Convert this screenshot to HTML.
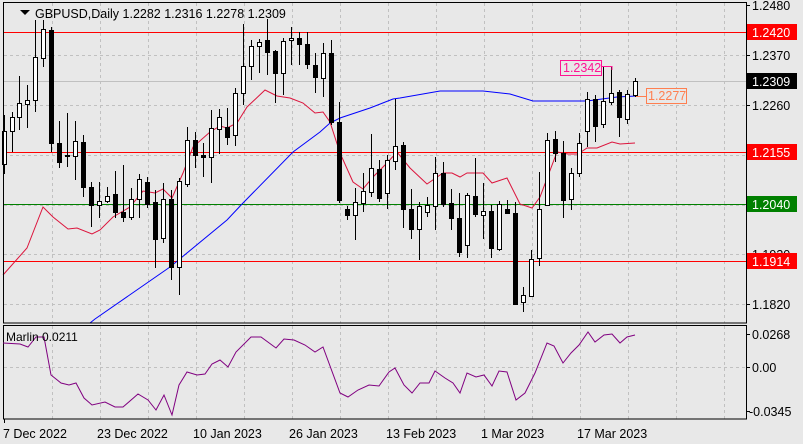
<!DOCTYPE html>
<html><head><meta charset="utf-8"><style>
html,body{margin:0;padding:0;background:#e8e8e8;}
svg{display:block;font-family:"Liberation Sans",sans-serif;}
</style></head><body>
<svg id="s" width="803" height="444" viewBox="0 0 803 444" xmlns="http://www.w3.org/2000/svg">
<rect width="803" height="444" fill="#e8e8e8"/>
<g id="grid" stroke="#c0c0c0" stroke-dasharray="3,3" stroke-width="1"></g>
<line x1="3" y1="81.5" x2="746" y2="81.5" stroke="#c0c0c0"/>
<line x1="3" y1="32.5" x2="746" y2="32.5" stroke="#ff0000"/>
<line x1="3" y1="152.5" x2="746" y2="152.5" stroke="#ff0000"/>
<line x1="3" y1="204.5" x2="746" y2="204.5" stroke="#008000"/>
<line x1="3" y1="261.5" x2="746" y2="261.5" stroke="#ff0000"/>
<polyline fill="none" stroke="#0000ff" stroke-width="1" points="90,323 95,319 170,267 227,220 243,203 293,152 320,132 330,123 340,118 370,108 393,99 400,98 440,91 483,91 510,94 533,101 587,101 617,97 637,96"/>
<polyline fill="none" stroke="#dc143c" stroke-width="1" points="3,275 27,248 43,207 53,217 68,229 77,228 92,234 100,230 113,217 130,207 143,191 155,193 163,189 172,198 183,173 193,147 210,132 220,126 227,128 237,123 247,107 265,90 277,96 290,98 303,103 315,113 323,112 330,122 340,153 353,182 363,189 373,177 387,163 397,152 410,168 427,184 443,173 452,173 460,177 467,173 483,173 492,183 507,178 520,204 532,208 540,197 557,152 568,154 578,154 587,148 597,148 612,142 620,144 635,143"/>
<g id="c"></g>
<rect x="3.5" y="2.5" width="743" height="320.5" fill="none" stroke="#000"/>
<rect x="3.5" y="325.5" width="743" height="93.5" fill="none" stroke="#000"/>
<polyline fill="none" stroke="#800080" stroke-width="1" points="3,343 20,344 28,347 36,337 44,337 51,375 61,383 69,385 76,383 84,398 92,405 105,402 115,407 123,407 138,394 148,400 156,410 164,395 172,415 179,385 187,372 197,375 205,374 212,364 220,360 228,367 236,352 251,337 261,337 276,348 284,339 294,340 305,345 315,352 323,347 340,393 348,397 358,390 369,385 379,386 389,372 395,368 404,385 412,393 420,383 429,383 435,371 445,378 453,383 460,393 467,373 476,377 484,375 492,386 499,371 507,372 516,400 525,393 535,373 547,343 554,346 563,363 571,353 579,345 588,332 595,342 604,335 612,334 620,343 627,337 635,335"/>
<!-- labels -->
<polygon points="20,10 30,10 25,15" fill="#000"/>
<text x="35" y="18" font-size="12.5" fill="#000">GBPUSD,Daily  1.2282 1.2316 1.2278 1.2309</text>
<text x="6" y="341" font-size="12" fill="#000">Marlin 0.0211</text>
<g stroke="#ff1493" fill="none"><rect x="560.5" y="60.5" width="41" height="15" fill="#e8e8e8"/><polyline points="602,66.5 612,66.5 612,70"/></g>
<text x="563" y="72" font-size="12.5" fill="#ff1493">1.2342</text>
<g stroke="#ff7f50" fill="none"><rect x="646.5" y="88.5" width="40" height="15" fill="#e8e8e8"/><line x1="636" y1="96.5" x2="646" y2="96.5"/></g>
<text x="648" y="100" font-size="12.5" fill="#ff7f50">1.2277</text>
<g font-size="12.5" fill="#000">
<text x="752" y="10">1.2480</text>
<text x="752" y="60">1.2370</text>
<text x="752" y="110">1.2260</text>
<text x="752" y="259">1.1930</text>
<text x="752" y="309">1.1820</text>
<text x="752" y="339">0.0268</text>
<text x="752" y="372">0.00</text>
<text x="749" y="416">-0.0345</text>
</g>
<g stroke="#000"><line x1="746" y1="5.5" x2="750" y2="5.5"/><line x1="746" y1="55.5" x2="750" y2="55.5"/><line x1="746" y1="105.5" x2="750" y2="105.5"/><line x1="746" y1="304.5" x2="750" y2="304.5"/><line x1="746" y1="334.5" x2="750" y2="334.5"/><line x1="746" y1="367.5" x2="750" y2="367.5"/><line x1="746" y1="411.5" x2="750" y2="411.5"/></g>
<rect x="747" y="24" width="50" height="16" fill="#ff0000"/><text x="752" y="37" font-size="12.5" fill="#fff">1.2420</text>
<rect x="747" y="73" width="50" height="16" fill="#000"/><text x="752" y="86" font-size="12.5" fill="#fff">1.2309</text>
<rect x="747" y="144" width="50" height="16" fill="#ff0000"/><text x="752" y="157" font-size="12.5" fill="#fff">1.2155</text>
<rect x="747" y="196" width="50" height="16" fill="#008000"/><text x="752" y="209" font-size="12.5" fill="#fff">1.2040</text>
<rect x="747" y="253" width="50" height="16" fill="#ff0000"/><text x="752" y="266" font-size="12.5" fill="#fff">1.1914</text>
<g font-size="12.5" fill="#000">
<text x="3" y="438">7 Dec 2022</text>
<text x="97" y="438">23 Dec 2022</text>
<text x="193" y="438">10 Jan 2023</text>
<text x="289" y="438">26 Jan 2023</text>
<text x="386" y="438">13 Feb 2023</text>
<text x="481" y="438">1 Mar 2023</text>
<text x="577" y="438">17 Mar 2023</text>
</g>
<g stroke="#000"><line x1="4.5" y1="419" x2="4.5" y2="423"/></g>
</svg>
<script>
var NS="http://www.w3.org/2000/svg",g=document.getElementById('grid'),c=document.getElementById('c');
function el(p,t,a){var e=document.createElementNS(NS,t);for(var k in a)e.setAttribute(k,a[k]);p.appendChild(e);return e;}
[55,105,155,205,254,304].forEach(function(y){el(g,'line',{x1:4,x2:746,y1:y+.5,y2:y+.5});});
el(g,'line',{x1:4,x2:746,y1:367.5,y2:367.5});
for(var x=52;x<746;x+=48){el(g,'line',{x1:x+.5,x2:x+.5,y1:3,y2:323});el(g,'line',{x1:x+.5,x2:x+.5,y1:326,y2:419});}
var d=[[4,'B',164,131,115,174],[12,'B',131,117,112,152],[19,'B',117,103,76,130],[27,'B',104,100,85,128],[35,'B',100,57,20,112],[43,'B',58,29,20,67],[51,'R',30,143,27,152],[59,'R',143,162,121,168],[67,'R',155,156,113,167],[75,'B',156,141,121,180],[83,'R',142,187,135,197],[91,'R',187,205,182,227],[99,'B',205,201,182,218],[107,'B',201,196,187,203],[115,'R',194,212,171,218],[123,'R',212,217,165,222],[131,'B',217,199,188,220],[139,'B',199,179,174,218],[147,'R',182,204,177,208],[155,'R',202,239,190,268],[163,'B',238,199,183,243],[171,'R',199,267,190,280],[179,'B',267,181,178,295],[187,'B',184,140,127,187],[195,'R',140,155,132,168],[203,'R',155,157,143,177],[211,'B',157,128,110,183],[219,'B',129,117,109,154],[227,'R',127,137,108,145],[235,'B',135,93,88,146],[243,'B',93,66,24,105],[251,'B',66,46,40,80],[259,'B',46,42,39,73],[267,'R',40,52,19,75],[275,'R',51,73,50,103],[283,'B',73,41,38,95],[291,'B',40,38,27,65],[299,'R',38,44,32,65],[307,'R',44,64,32,69],[315,'R',65,77,53,93],[323,'B',78,53,43,97],[331,'R',53,122,40,125],[339,'R',122,200,102,203],[347,'R',209,215,206,220],[355,'B',215,202,188,240],[363,'B',203,191,173,212],[371,'B',192,168,134,197],[379,'R',169,198,160,202],[387,'B',193,160,155,209],[395,'B',161,146,99,170],[403,'R',145,209,142,228],[411,'R',209,229,189,239],[419,'B',229,206,202,260],[427,'B',212,205,197,217],[435,'B',206,173,157,230],[443,'R',173,204,162,207],[451,'R',203,218,189,230],[459,'R',218,252,193,257],[467,'B',245,195,193,258],[475,'R',196,214,158,217],[483,'B',215,211,183,239],[491,'R',211,248,205,258],[499,'B',249,204,201,251],[507,'R',209,213,200,214],[515,'R',213,304,202,304],[523,'B',302,295,287,312],[531,'B',296,259,250,297],[539,'B',258,209,172,266],[547,'B',205,140,133,205],[555,'R',139,153,131,162],[563,'R',153,200,141,218],[571,'B',199,173,168,210],[579,'B',173,143,133,177],[587,'B',131,99,92,147],[595,'R',99,126,95,142],[603,'B',124,101,66,128],[611,'B',102,93,66,105],[619,'R',92,117,90,137],[627,'B',119,94,90,124],[635,'B',95,81,78,97]];
d.forEach(function(k){var x=k[0],t=Math.min(k[2],k[3]),b=Math.max(k[2],k[3]);
el(c,'line',{x1:x+.5,x2:x+.5,y1:k[4],y2:k[5],stroke:'#000'});
el(c,'rect',{x:x-1.5,y:t+.5,width:4,height:Math.max(b-t,1),fill:k[1]=='B'?'#fff':'#000',stroke:'#000'});});
</script>
</body></html>
